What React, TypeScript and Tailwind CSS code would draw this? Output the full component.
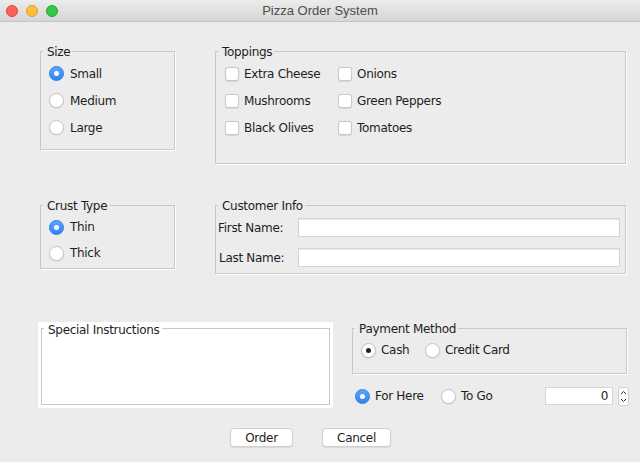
import React from "react";

const font = { fontFamily: '"DejaVu Sans", sans-serif' };

function Radio({ state }: { state: "on" | "off" | "inactive" }) {
  if (state === "on")
    return (
      <span className="flex h-[15px] w-[15px] shrink-0 items-center justify-center rounded-full border border-[#2b7ee8] bg-gradient-to-b from-[#5aa6fb] to-[#2f84f3]">
        <span className="h-[5px] w-[5px] rounded-full bg-white" />
      </span>
    );
  if (state === "inactive")
    return (
      <span className="flex h-[15px] w-[15px] shrink-0 items-center justify-center rounded-full border border-[#c2c2c2] bg-white shadow-[0_0.5px_1px_rgba(0,0,0,0.15)]">
        <span className="h-[5px] w-[5px] rounded-full bg-[#222]" />
      </span>
    );
  return (
    <span className="h-[15px] w-[15px] shrink-0 rounded-full border border-[#c6c6c6] bg-white shadow-[0_0.5px_1px_rgba(0,0,0,0.12)]" />
  );
}

function Check() {
  return (
    <span className="h-[14px] w-[14px] shrink-0 rounded-[3px] border border-[#c9c9c9] bg-white shadow-[0_0.5px_1px_rgba(0,0,0,0.1)]" />
  );
}

function Legend({ text, white = false }: { text: string; white?: boolean }) {
  return (
    <span
      className={
        white
          ? "absolute left-[2px] top-[-6px] bg-white pl-[4px] pr-[2px] text-[12px] leading-[14px] tracking-[-0.3px] text-[#1e1e1e]"
          : "absolute left-[2px] top-[-7px] bg-[#ececec] pl-[4px] pr-[2px] text-[12px] leading-[14px] tracking-[-0.3px] text-[#1e1e1e]"
      }
    >
      {text}
    </span>
  );
}

function Box({
  title,
  className,
  children,
}: {
  title: string;
  className: string;
  children?: React.ReactNode;
}) {
  return (
    <div
      className={`relative shrink-0 border border-[#c8c8c8] shadow-[1px_1px_0_#ffffff] ${className}`}
    >
      <Legend text={title} />
      {children}
    </div>
  );
}

export default function App() {
  const label = "text-[12px] tracking-[-0.3px] text-[#1e1e1e] leading-none";
  return (
    <div
      className="h-[462px] w-[640px] overflow-hidden bg-[#ececec] text-[#1e1e1e]"
      style={font}
    >
      {/* Title bar */}
      <div className="relative flex h-[22px] items-center border-b border-[#c4c4c4] bg-gradient-to-b from-[#ececec] to-[#d6d6d6]">
        <div className="flex gap-[8px] pl-[6px]">
          <span className="h-[12px] w-[12px] rounded-full border border-[#e0443e] bg-[#fc615d]" />
          <span className="h-[12px] w-[12px] rounded-full border border-[#dea123] bg-[#fdbc40]" />
          <span className="h-[12px] w-[12px] rounded-full border border-[#1aab29] bg-[#34c84a]" />
        </div>
        <div
          className="absolute inset-x-0 top-0 flex h-[21px] items-center justify-center text-[13px] text-[#4d4d4d]"
          style={{ fontFamily: '"Liberation Sans", Arial, sans-serif' }}
        >
          Pizza Order System
        </div>
      </div>

      {/* Row 1 */}
      <div className="mt-[29px] flex items-start">
        <Box title="Size" className="ml-[40px] h-[99px] w-[135px]">
          <div className="flex flex-col pl-[8px] pt-[8px]">
            {[
              ["Small", "on"],
              ["Medium", "off"],
              ["Large", "off"],
            ].map(([t, s]) => (
              <div key={t} className="flex h-[27px] items-center gap-[6px]">
                <Radio state={s as "on" | "off"} />
                <span className={label}>{t}</span>
              </div>
            ))}
          </div>
        </Box>
        <Box title="Toppings" className="ml-[40px] h-[113px] w-[411px]">
          <div className="grid grid-cols-[113px_1fr] pl-[9px] pt-[8px]">
            {["Extra Cheese", "Onions", "Mushrooms", "Green Peppers", "Black Olives", "Tomatoes"].map(
              (t) => (
                <div key={t} className="flex h-[27px] items-center gap-[5px]">
                  <Check />
                  <span className={label}>{t}</span>
                </div>
              )
            )}
          </div>
        </Box>
      </div>

      {/* Row 2 */}
      <div className="mt-[41px] flex items-start">
        <Box title="Crust Type" className="ml-[40px] h-[64px] w-[135px]">
          <div className="flex flex-col pl-[8px] pt-[8px]">
            <div className="flex h-[26px] items-center gap-[6px]">
              <Radio state="on" />
              <span className={label}>Thin</span>
            </div>
            <div className="flex h-[26px] items-center gap-[6px]">
              <Radio state="off" />
              <span className={label}>Thick</span>
            </div>
          </div>
        </Box>
        <Box title="Customer Info" className="ml-[40px] h-[69px] w-[411px]">
          <div className="grid grid-cols-[80px_322px] gap-y-[11px] pl-[2px] pt-[12px]">
            <div className={`flex items-center ${label}`}>First Name:</div>
            <div className="h-[19px] border border-[#d4d4d4] bg-white shadow-[inset_0_1px_0_#eaeaea]" />
            <div className={`flex items-center pl-[1px] ${label}`}>Last Name:</div>
            <div className="h-[19px] border border-[#d4d4d4] bg-white shadow-[inset_0_1px_0_#eaeaea]" />
          </div>
        </Box>
      </div>

      {/* Row 3 */}
      <div className="mt-[48px] flex items-start">
        <div className="ml-[38px] h-[86px] w-[295px] shrink-0 bg-white px-[3px] pb-[3px] pt-[6px]">
          <div className="relative h-full w-full border border-[#c8c8c8]">
            <Legend text="Special Instructions" white />
          </div>
        </div>
        <div className="ml-[19px] flex w-[277px] flex-col pt-[6px]">
          <Box title="Payment Method" className="h-[46px] w-[275px]">
            <div className="flex pl-[8px] pt-[11px]">
              <div className="flex h-[20px] w-[64px] items-center gap-[5px]">
                <Radio state="inactive" />
                <span className={label}>Cash</span>
              </div>
              <div className="flex h-[20px] items-center gap-[5px]">
                <Radio state="off" />
                <span className={label}>Credit Card</span>
              </div>
            </div>
          </Box>
          <div className="mt-[12px] flex h-[20px] items-center">
            <div className="ml-[3px] flex w-[86px] items-center gap-[5px]">
              <Radio state="on" />
              <span className={label}>For Here</span>
            </div>
            <div className="flex items-center gap-[5px]">
              <Radio state="off" />
              <span className={label}>To Go</span>
            </div>
            <div className="ml-auto flex items-center">
              <div className={`flex h-[18px] w-[68px] items-center justify-end border border-[#d4d4d4] bg-white pr-[4px] ${label}`}>
                0
              </div>
              <div className="ml-[5px] flex h-[19px] w-[11px] flex-col items-center justify-center rounded-[3px] border border-[#d0d0d0] bg-white">
                <svg width="7" height="15" viewBox="0 0 7 15" fill="none" stroke="#333" strokeWidth="1">
                  <path d="M1 5 L3.5 2.5 L6 5" />
                  <path d="M1 10 L3.5 12.5 L6 10" />
                </svg>
              </div>
            </div>
          </div>
        </div>
      </div>

      {/* Buttons */}
      <div className="mt-[20px] flex">
        <button className="ml-[230px] flex h-[19px] w-[63px] items-center justify-center rounded-[4px] border border-[#cfcfcf] bg-white text-[12px] tracking-[-0.3px] text-[#1e1e1e] shadow-[0_1px_1px_rgba(0,0,0,0.08)]">
          Order
        </button>
        <button className="ml-[29px] flex h-[19px] w-[69px] items-center justify-center rounded-[4px] border border-[#cfcfcf] bg-white text-[12px] tracking-[-0.3px] text-[#1e1e1e] shadow-[0_1px_1px_rgba(0,0,0,0.08)]">
          Cancel
        </button>
      </div>
    </div>
  );
}
